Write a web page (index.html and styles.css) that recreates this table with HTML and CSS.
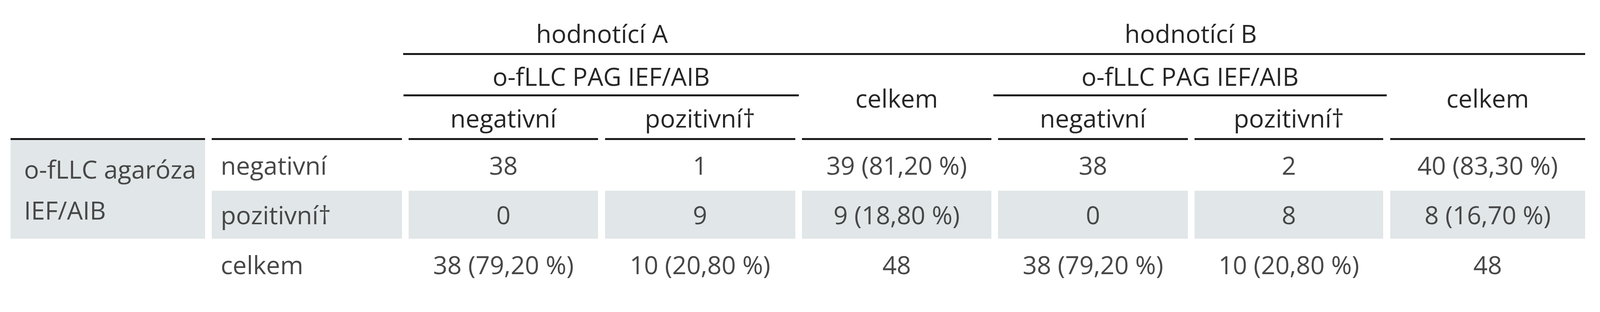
FILE: index.html
```html
<!DOCTYPE html>
<html lang="cs">
<head>
<meta charset="utf-8">
<title>Tabulka</title>
<link rel="stylesheet" href="styles.css">
</head>
<body>
<div class="table">
  <div class="rule-top"></div>

  <div class="cell head lvl1 r1 c-stub"></div>
  <div class="cell head lvl1 r1 c-a">hodnotící A</div>
  <div class="cell head lvl1 r1 c5"></div>
  <div class="cell head lvl1 r1 c-b">hodnotící B</div>
  <div class="cell head lvl1 r1 c8"></div>

  <div class="cell head r2 c-stub"></div>
  <div class="cell head lvl2 r2 c-a">o-fLLC PAG IEF/AIB</div>
  <div class="cell head total-head r23 c5">celkem</div>
  <div class="cell head lvl2 r2 c-b">o-fLLC PAG IEF/AIB</div>
  <div class="cell head total-head r23 c8">celkem</div>

  <div class="cell head lvl3 r3 c1"></div>
  <div class="cell head lvl3 r3 c2"></div>
  <div class="cell head lvl3 r3 c3">negativní</div>
  <div class="cell head lvl3 r3 c4">pozitivní†</div>
  <div class="cell head lvl3 r3 c6">negativní</div>
  <div class="cell head lvl3 r3 c7">pozitivní†</div>

  <div class="cell group rows2">o-fLLC agaróza IEF/AIB</div>
  <div class="cell label">negativní</div>
  <div class="cell">38</div>
  <div class="cell">1</div>
  <div class="cell">39 (81,20 %)</div>
  <div class="cell">38</div>
  <div class="cell">2</div>
  <div class="cell">40 (83,30 %)</div>

  <div class="cell label shade">pozitivní†</div>
  <div class="cell shade">0</div>
  <div class="cell shade">9</div>
  <div class="cell shade">9 (18,80 %)</div>
  <div class="cell shade">0</div>
  <div class="cell shade">8</div>
  <div class="cell shade">8 (16,70 %)</div>

  <div class="cell"></div>
  <div class="cell label">celkem</div>
  <div class="cell">38 (79,20 %)</div>
  <div class="cell">10 (20,80 %)</div>
  <div class="cell">48</div>
  <div class="cell">38 (79,20 %)</div>
  <div class="cell">10 (20,80 %)</div>
  <div class="cell">48</div>
</div>
</body>
</html>
```

FILE: styles.css
```css
:root {
  /* horizontal unit: 1/4459 of the window width */
  --u: calc(100vw / 4459);
}

html, body {
  margin: 0;
  padding: 0;
  background: #ffffff;
  overflow: hidden;
}

body {
  font-family: "Open Sans", "Noto Sans", sans-serif;
  font-size: 64px;
  color: #474747;
}

.table {
  display: grid;
  grid-template-columns:
    calc(var(--u) * 542) calc(var(--u) * 530) calc(var(--u) * 528) calc(var(--u) * 530)
    calc(var(--u) * 528) calc(var(--u) * 528) calc(var(--u) * 526) calc(var(--u) * 544);
  grid-template-rows: 141px 106px 112px 130px 123px 134px;
  column-gap: calc(var(--u) * 19);
  margin-left: calc(var(--u) * 29);
}

.cell {
  display: flex;
  align-items: center;
  justify-content: center;
  line-height: 64px;
  white-space: nowrap;
  box-sizing: border-box;
}

/* header placement */
.r1 { grid-row: 1; }
.r2 { grid-row: 2; }
.r3 { grid-row: 3; }
.r23 { grid-row: 2 / 4; }
.c-stub { grid-column: 1 / 3; }
.c-a { grid-column: 3 / 5; }
.c-b { grid-column: 6 / 8; }
.c1 { grid-column: 1; }
.c2 { grid-column: 2; }
.c3 { grid-column: 3; }
.c4 { grid-column: 4; }
.c5 { grid-column: 5; }
.c6 { grid-column: 6; }
.c7 { grid-column: 7; }
.c8 { grid-column: 8; }

.rows2 {
  grid-row: span 2;
}

.rule-top {
  grid-row: 1;
  grid-column: 3 / 9;
  align-self: end;
  height: 5px;
  background: #1a1a1a;
  margin-left: calc(var(--u) * -15);
}

.head {
  align-items: flex-end;
  color: #262626;
}

.lvl1 {
  padding-bottom: 23px;
}

.lvl2 {
  padding-bottom: 14px;
  border-bottom: 5px solid #1a1a1a;
  margin: 0 calc(var(--u) * -10) 0 calc(var(--u) * -14);
}

.lvl3 {
  padding-bottom: 19px;
  border-bottom: 5px solid #1a1a1a;
}

.head.total-head {
  align-items: center;
  padding-top: 8px;
  border-bottom: 5px solid #1a1a1a;
}

.group {
  justify-content: flex-start;
  padding-left: calc(var(--u) * 38);
  padding-right: calc(var(--u) * 10);
  line-height: 105px;
  white-space: normal;
  background: #e1e6e8;
}

.label {
  justify-content: flex-start;
  padding-left: calc(var(--u) * 25);
}

.shade {
  background: #e1e6e8;
}
```
